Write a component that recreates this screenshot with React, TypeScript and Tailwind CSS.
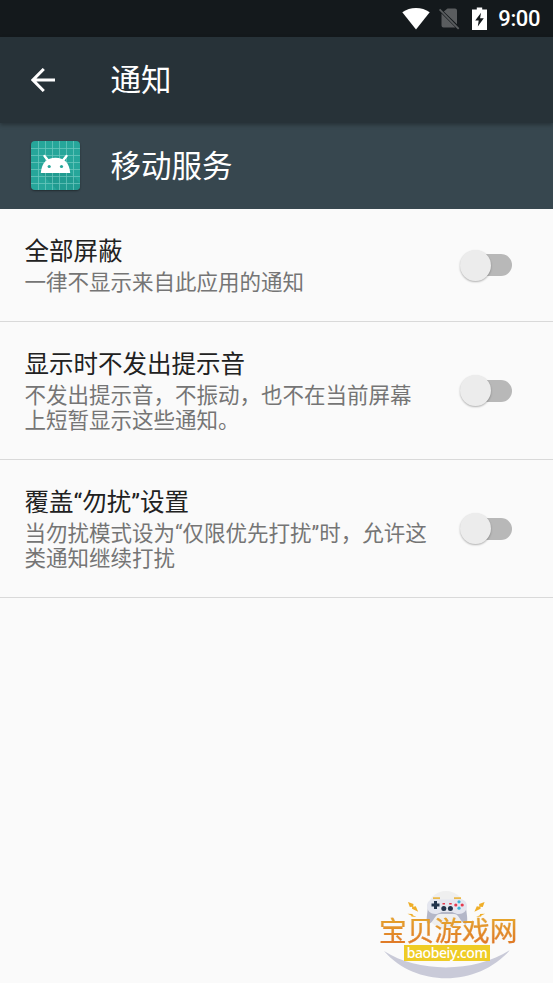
import { useState } from 'react'

interface Setting {
    id: string
    title: string
    lines: string[]
}

const settings: Setting[] = [
    { id: 'block', title: '全部屏蔽', lines: ['一律不显示来自此应用的通知'] },
    { id: 'silent', title: '显示时不发出提示音', lines: ['不发出提示音，不振动，也不在当前屏幕', '上短暂显示这些通知。'] },
    { id: 'override', title: '覆盖“勿扰”设置', lines: ['当勿扰模式设为“仅限优先打扰”时，允许这', '类通知继续打扰'] },
]

function StatusBar() {
    return (
        <div className="flex h-[37px] items-center justify-end bg-[#14191c] pr-[13px] text-white">
            <svg className="mr-[8px] h-[24px] w-[28px]" viewBox="0 0 28 24" fill="currentColor">
                <path d="M.3 5.2C8-.5 20-.5 27.7 5.2L14 22.5z" />
            </svg>
            <svg className="mr-[12px] h-[24px] w-[22px]" viewBox="0 0 22 24">
                <path d="M9.5 1.5H17a2 2 0 0 1 2 2v13.8L5.8 4.6zM3.5 6.5 17.500 20.500H5.500a2 2 0 0 1-2-2z" fill="#5a5d5f" />
                <path d="M1.600 2.300 20.700 21.800" stroke="#5a5d5f" strokeWidth="1.8" />
            </svg>
            <svg className="mr-[11px] h-[24px] w-[15px]" viewBox="0 0 15 24" fill="currentColor">
                <path fillRule="evenodd" d="M4.8 .5h5.4v2H15V23H0V2.5h4.8zM9 5.7 3.200 13.500h3.500L5.800 19.500l6-8.200H8.100z" />
            </svg>
            <span className="text-[22px] leading-[38px] font-medium tracking-[-0.4px]">9:00</span>
        </div>
    )
}

function AppIcon() {
    return (
        <svg className="mb-[1px] h-[49px] w-[49px] rounded-[4px] shadow-[0_1px_2px_rgba(0,0,0,0.4)]" viewBox="0 0 49 49">
            <rect width="49" height="49" fill="#26a69a" />
            <path d="M10 32h29l10 10v7H26z" fill="#1d8f84" opacity=".45" />
            <path
                d="M7.5 0v49M14.5 0v49M21.5 0v49M28.5 0v49M35.5 0v49M42.5 0v49M0 7.5h49M0 14.5h49M0 21.5h49M0 28.5h49M0 35.5h49M0 42.5h49"
                stroke="#7fd0c8"
                strokeWidth=".8"
                opacity=".75"
            />
            <path d="M9.800 32C10.600 21.500 16 16.700 24.500 16.700S38.400 21.500 39.200 32z" fill="#fff" />
            <path d="m13.500 15 4 5M35.500 15l-4 5" stroke="#fff" strokeWidth="2.4" strokeLinecap="round" />
            <circle cx="18.2" cy="25.500" r="1.6" fill="#26a69a" />
            <circle cx="30.5" cy="25.500" r="1.6" fill="#26a69a" />
        </svg>
    )
}

function Toggle({ on, onClick }: { on: boolean; onClick: () => void }) {
    return (
        <button role="switch" aria-checked={on} onClick={onClick} className="flex h-[31px] w-[52px] shrink-0 items-center justify-end">
            <span className={`flex h-[22px] w-[44px] items-center rounded-full bg-[#b8b8b8] ${on ? 'justify-end' : 'justify-start'}`}>
                <span className="ml-[-8px] h-[31px] w-[31px] shrink-0 rounded-full bg-[#ececec] shadow-[0_1px_2px_rgba(0,0,0,0.3)]" />
            </span>
        </button>
    )
}

function Watermark() {
    return (
        <div className="absolute top-[885px] left-[374px] h-[98px] w-[150px]">
            <svg className="absolute inset-0 h-full w-full" viewBox="0 0 150 98">
                <circle cx="72" cy="25" r="19" fill="#efefef" />
                <path d="M10 66c34 22 91 22 126-1-32 37-94 38-126 1z" fill="#c9cad8" />
                {/* gamepad */}
                <path d="M59 13.200h7M80 13.200h7" stroke="#ebb94a" strokeWidth="2" />
                <path d="M54 20c0 7-2 12-1 18 3 3 6-3 9-7 2-2 3-2 5-2h12c2 0 3 0 5 2 3 4 6 10 9 7 1-6-1-11-1-18z" fill="#b4b7c8" />
                <path d="M61 14c3 0 5 .5 8 .5h8c3 0 5-.5 8-.5 5 0 8 3 8 7 0 5-4 8-8 8s-5-2-8-2h-8c-3 0-4 2-8 2s-8-3-8-8c0-4 3-7 8-7z" fill="#e4e6ef" />
                <path d="M61.500 16v8M57.500 20h8" stroke="#22344c" strokeWidth="3" />
                <circle cx="85" cy="16.800" r="1.6" fill="#3db2d6" />
                <circle cx="85" cy="23.200" r="1.6" fill="#3db2d6" />
                <circle cx="81.800" cy="20" r="1.6" fill="#e6394e" />
                <circle cx="88.200" cy="20" r="1.6" fill="#e6394e" />
                <circle cx="69.800" cy="23.500" r="2.5" fill="#22344c" />
                <circle cx="76.400" cy="23.500" r="2.5" fill="#22344c" />
                <path d="M68.500 18.800h2.500M75.200 18.800h2.500" stroke="#e6394e" strokeWidth="1.4" />
                {/* sparks */}
                <g fill="#efae28">
                    <path id="spark" d="M34 17l5.500 2-.3 2.800 2.600-.6 2.400 5.600-6.200-3 .2-2-2.400.2zM33.500 28.800l5 .2.300 1.200 3.700 1.800-5-.6-.3-1z" />
                    <use href="#spark" transform="matrix(-1 0 0 1 144.600 0)" />
                </g>
            </svg>
            <div className="relative flex flex-col pt-[33px] pl-[5px]">
                <span className="h-[27px] bg-gradient-to-b from-[#e6a62b] to-[#df7326] bg-clip-text text-[27.700px] leading-[27px] whitespace-nowrap text-transparent [-webkit-text-stroke:0.2px_#e08a2a]">
                    宝贝游戏网
                </span>
                <span className="ml-[25px] h-[16px] w-[86px] bg-[#efcc25] text-center font-['Noto_Sans'] text-[14px] leading-[15px] font-medium tracking-[-0.400px] text-white">
                    baobeiy.com
                </span>
            </div>
        </div>
    )
}

export default function App() {
    const [enabled, setEnabled] = useState<Record<string, boolean>>({})

    return (
        <div className="relative h-[983px] w-[553px] overflow-hidden bg-[#fafafa] font-[Roboto,'Noto_Sans_CJK_SC',sans-serif]">
            <StatusBar />
            <header className="relative flex h-[86px] items-center bg-[#273238] pl-[31px] text-white shadow-[0_2px_4px_rgba(0,0,0,0.3)]">
                <svg className="h-[24px] w-[24px]" viewBox="0 0 24 24" fill="none" stroke="currentColor" strokeWidth="3">
                    <path d="M24 12H2.500M12.800 1 1.900 12l10.900 11" />
                </svg>
                <h1 className="ml-[55.500px] pt-[2px] text-[30.500px] leading-[40px]">通知</h1>
            </header>
            <div className="flex h-[86px] items-center bg-[#37474f] pl-[31px] text-white">
                <AppIcon />
                <span className="ml-[30.500px] pt-[2px] text-[30.500px] leading-[40px]">移动服务</span>
            </div>
            <main>
                {settings.map((s) => (
                    <div key={s.id} className="flex items-center justify-between border-b border-[#d9d9d9] pr-[41px] pb-[26px] pl-[24.500px]">
                        <div className="pt-[25px]">
                            <h2 className="text-[24.500px] leading-[36px] text-[#212121]">{s.title}</h2>
                            {s.lines.map((line) => (
                                <p key={line} className="text-[21.500px] leading-[25px] whitespace-nowrap text-[#757575]">{line}</p>
                            ))}
                        </div>
                        <div className="pt-[26px]">
                            <Toggle on={!!enabled[s.id]} onClick={() => setEnabled({ ...enabled, [s.id]: !enabled[s.id] })} />
                        </div>
                    </div>
                ))}
            </main>
            <Watermark />
        </div>
    )
}
